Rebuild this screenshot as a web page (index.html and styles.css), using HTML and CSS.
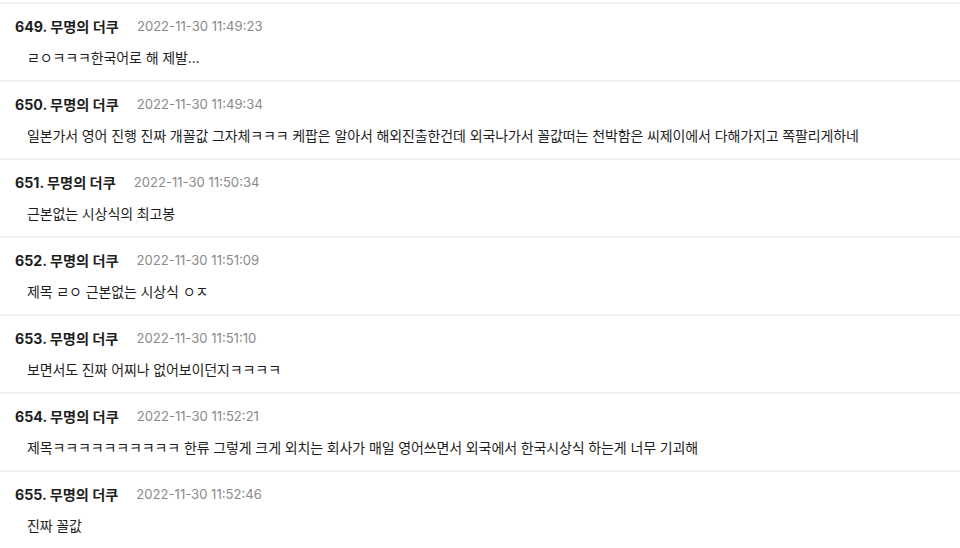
FILE: index.html
```html
<!DOCTYPE html>
<html lang="ko">
<head>
<meta charset="utf-8">
<link rel="stylesheet" href="styles.css">
</head>
<body>
<div class="list">
  <div class="item">
    <div class="head"><span class="name">649. 무명의 더쿠</span><span class="date">2022-11-30 11:49:23</span></div>
    <div class="text">ㄹㅇㅋㅋㅋ한국어로 해 제발...</div>
  </div>
  <div class="item">
    <div class="head"><span class="name">650. 무명의 더쿠</span><span class="date">2022-11-30 11:49:34</span></div>
    <div class="text">일본가서 영어 진행 진짜 개꼴값 그자체ㅋㅋㅋ 케팝은 알아서 해외진출한건데 외국나가서 꼴값떠는 천박함은 씨제이에서 다해가지고 쪽팔리게하네</div>
  </div>
  <div class="item">
    <div class="head"><span class="name">651. 무명의 더쿠</span><span class="date">2022-11-30 11:50:34</span></div>
    <div class="text">근본없는 시상식의 최고봉</div>
  </div>
  <div class="item">
    <div class="head"><span class="name">652. 무명의 더쿠</span><span class="date">2022-11-30 11:51:09</span></div>
    <div class="text">제목 ㄹㅇ 근본없는 시상식 ㅇㅈ</div>
  </div>
  <div class="item">
    <div class="head"><span class="name">653. 무명의 더쿠</span><span class="date">2022-11-30 11:51:10</span></div>
    <div class="text">보면서도 진짜 어찌나 없어보이던지ㅋㅋㅋㅋ</div>
  </div>
  <div class="item">
    <div class="head"><span class="name">654. 무명의 더쿠</span><span class="date">2022-11-30 11:52:21</span></div>
    <div class="text">제목ㅋㅋㅋㅋㅋㅋㅋㅋㅋㅋ 한류 그렇게 크게 외치는 회사가 매일 영어쓰면서 외국에서 한국시상식 하는게 너무 기괴해</div>
  </div>
  <div class="item">
    <div class="head"><span class="name">655. 무명의 더쿠</span><span class="date">2022-11-30 11:52:46</span></div>
    <div class="text">진짜 꼴값</div>
  </div>
</div>
</body>
</html>
```
FILE: styles.css
```css
html, body {
  margin: 0;
  padding: 0;
  background: #fff;
}
body {
  font-family: Inter, "Noto Sans CJK KR", sans-serif;
  color: #1e1e1e;
}
.list {
  padding-top: 2px;
  display: flex;
  flex-direction: column;
}
.item {
  border-top: 2px solid #efefef;
  padding: 12px 15px 12px 15px;
  display: flex;
  flex-direction: column;
  gap: 12px;
}
.head {
  display: flex;
  align-items: center;
  gap: 18px;
  height: 20px;
}
.name {
  font-size: 14.2px;
  font-weight: 700;
  color: #1e1e1e;
}
.date {
  font-size: 13.1px;
  color: #8a8a8a;
}
.text {
  font-size: 14px;
  line-height: 20px;
  padding-left: 12px;
  letter-spacing: -0.12px;
  color: #1e1e1e;
  white-space: nowrap;
}
```
